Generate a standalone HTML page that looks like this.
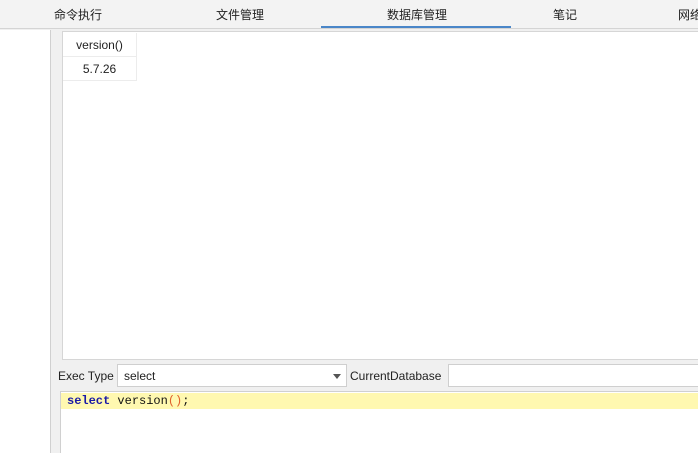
<!DOCTYPE html>
<html><head><meta charset="utf-8"><style>
*{margin:0;padding:0;box-sizing:border-box}
html,body{width:698px;height:453px;overflow:hidden}
body{background:#f0f0f0;font-family:"Liberation Sans","Noto Sans CJK SC",sans-serif;font-size:12px;color:#222;position:relative}
.abs{position:absolute}
.tabs{left:0;top:0;width:698px;height:29px;background:#f3f3f3;border-bottom:1px solid #d4d4d4}
.tab{position:absolute;top:6px;font-size:12px;color:#222;white-space:nowrap}
.ul{left:321px;top:26px;width:190px;height:2px;background:#4a86c8}
.left{left:0;top:30px;width:51px;height:423px;background:#fff;border-right:1px solid #d0d0d0}
.table{left:62px;top:31px;width:640px;height:329px;background:#fff;border:1px solid #d6d6d6}
.cell{position:absolute;left:0;width:74px;text-align:center;border-right:1px solid #ececec;border-bottom:1px solid #ececec;font-size:12px}
.sel{left:117px;top:364px;width:230px;height:23px;background:#fff;border:1px solid #cfcfcf}
.db{left:448px;top:364px;width:260px;height:23px;background:#fff;border:1px solid #cfcfcf}
.ed{left:60px;top:391px;width:650px;height:62px;background:#fff;border:1px solid #d0d0d0;border-bottom:none}
.hl{left:61px;top:393px;width:640px;height:16px;background:#fff8b0}
.code{left:67px;top:393px;font-family:"Liberation Mono","DejaVu Sans Mono",monospace;font-size:12px;line-height:16px;color:#111}
</style></head><body>
<div class="abs tabs">
<span class="tab" style="left:54px">命令执行</span>
<span class="tab" style="left:216px">文件管理</span>
<span class="tab" style="left:387px">数据库管理</span>
<span class="tab" style="left:553px">笔记</span>
<span class="tab" style="left:678px">网络</span>
</div>
<div class="abs ul"></div>
<div class="abs left"></div>
<div class="abs table">
<div class="cell" style="top:1px;height:24px;line-height:24px">version()</div>
<div class="cell" style="top:25px;height:24px;line-height:24px">5.7.26</div>
</div>
<div class="abs" style="left:58px;top:369px">Exec Type</div>
<div class="abs sel"><span class="abs" style="left:6px;top:4px">select</span><span class="abs" style="left:215px;top:9px;width:0;height:0;border-left:4px solid transparent;border-right:4px solid transparent;border-top:5px solid #555"></span></div>
<div class="abs" style="left:350px;top:369px">CurrentDatabase</div>
<div class="abs db"></div>
<div class="abs ed"></div>
<div class="abs hl"></div>
<div class="abs code"><b style="color:#1a1aa6">select</b> version<span style="color:#e0602a">()</span>;</div>
</body></html>
